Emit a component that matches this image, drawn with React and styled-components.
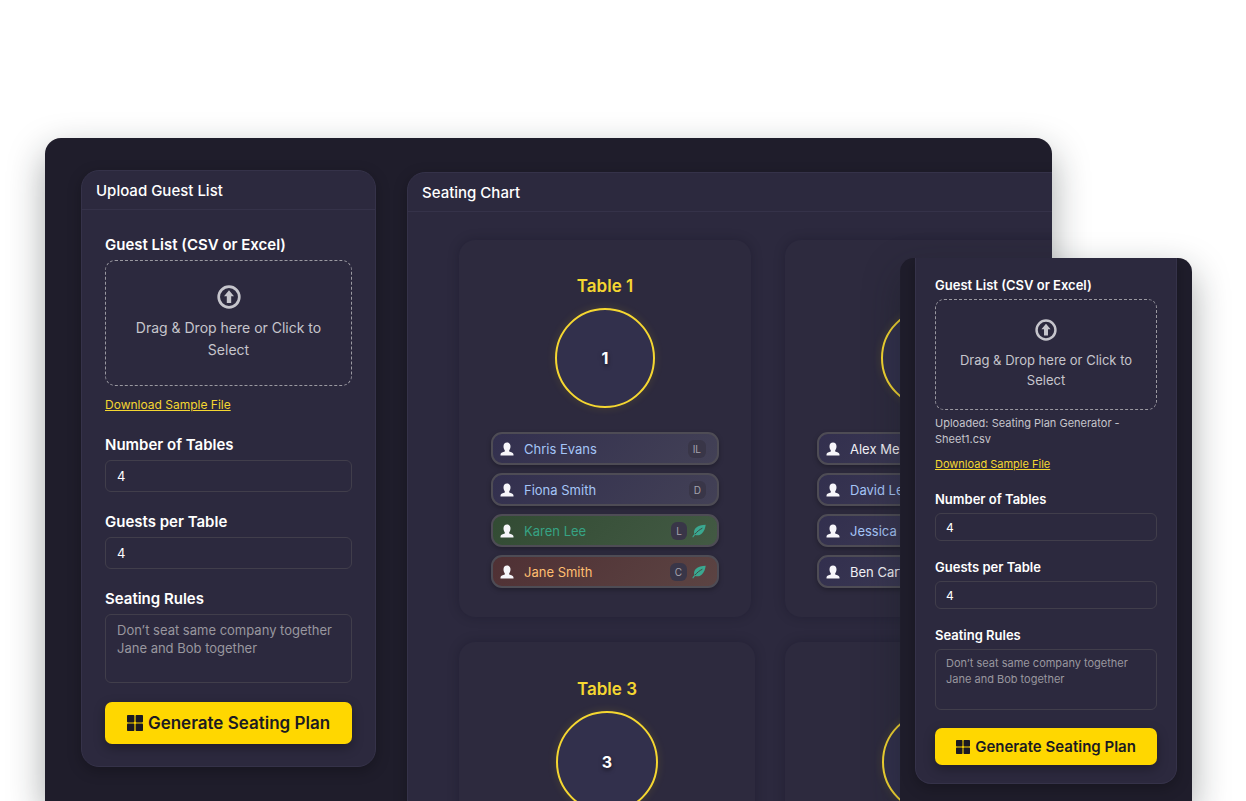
import { useId } from 'react';
import styled, { createGlobalStyle, css, ThemeProvider } from 'styled-components';

const colors = {
  window: '#1f1d2b',
  card: '#2c293e',
  cardBorder: '#353249',
  tableCard: '#2d2a3e',
  fieldBorder: '#413e4b',
  dash: '#9b99a1',
  white: '#ffffff',
  text: '#f4f3f7',
  muted: '#c6c5cc',
  placeholder: '#99979f',
  yellow: '#ffd700',
  gold: '#f5d731',
  ink: '#1b1a22',
};

// sizes for the desktop window and the phone window
const desktop = {
  label: 15,
  labelLine: 22,
  labelGap: 4,
  body: 14,
  bodyLine: 22,
  field: 13,
  area: 13,
  fieldLine: 18,
  fieldHeight: 32,
  fieldPad: 11,
  areaHeight: 69,
  areaPad: 6,
  group: 19,
  link: 12,
  linkLine: 18,
  linkTop: 10,
  linkBottom: 20,
  dropPad: 24,
  dropGap: 8,
  dropIcon: 24,
  radius: 6,
  dropRadius: 10,
  button: 17,
  buttonHeight: 42,
  buttonIcon: 16,
  buttonTop: 0,
  pad: 23,
  cardRadius: 18,
};

const phone = {
  label: 13,
  labelLine: 20,
  labelGap: 4,
  body: 13,
  bodyLine: 20,
  field: 12,
  area: 11,
  fieldLine: 16,
  fieldHeight: 28,
  fieldPad: 10,
  areaHeight: 61,
  areaPad: 5,
  group: 16,
  link: 11,
  linkLine: 16,
  linkTop: 9,
  linkBottom: 17,
  dropPad: 19,
  dropGap: 9,
  dropIcon: 22,
  radius: 6,
  dropRadius: 9,
  button: 15,
  buttonHeight: 37,
  buttonIcon: 14,
  buttonTop: 2,
  pad: 19,
  cardRadius: 16,
};

const GlobalStyle = createGlobalStyle`
  *, *::before, *::after {
    box-sizing: border-box;
  }
  body {
    margin: 0;
    background: ${colors.white};
    color: ${colors.text};
    font-family: Inter, "Liberation Sans", sans-serif;
  }
  input, textarea, button {
    font-family: inherit;
  }
`;

const Page = styled.main`
  position: relative;
  display: flex;
  height: 100vh;
  padding: 138px 194px 0 45px;
  overflow: hidden;
`;
const DesktopWindow = styled.div`
  display: flex;
  align-items: flex-start;
  gap: 31px;
  flex: 1;
  min-width: 0;
  padding: 32px 0 0 36px;
  border-radius: 16px 16px 0 0;
  background: ${colors.window};
  box-shadow: 0 14px 36px rgba(20, 28, 32, 0.38);
  overflow: hidden;
`;
const PhoneWindow = styled.div`
  position: absolute;
  top: 258px;
  right: 54px;
  bottom: 0;
  width: 292px;
  padding: 0 15px;
  border-radius: 14px 14px 0 0;
  background: ${colors.window};
  box-shadow: 0 14px 36px rgba(20, 28, 32, 0.38);
  overflow: hidden;
`;
const Card = styled.section`
  border: 1px solid ${colors.cardBorder};
  border-radius: ${p => p.theme.cardRadius}px;
  background: ${colors.card};
  box-shadow: 0 4px 14px rgba(0, 0, 0, 0.25);
  ${p =>
    p.$cut &&
    css`
      border-top: 0;
      border-top-left-radius: 0;
      border-top-right-radius: 0;
    `};
`;
const UploadCard = styled(Card)`
  width: 295px;
  flex-shrink: 0;
`;
const ChartCard = styled(Card)`
  flex: 0 0 752px;
  margin-top: 2px;
`;
const CardHeader = styled.h2`
  margin: 0;
  padding: 9px 14px 7px;
  border-bottom: 1px solid ${colors.cardBorder};
  color: ${colors.white};
  font-size: 15px;
  font-weight: 500;
  line-height: 22px;
`;
const Form = styled.form`
  display: flex;
  flex-direction: column;
  padding: ${p => (p.$cut ? 17 : 24)}px ${p => p.theme.pad}px
    ${p => p.theme.pad - 1}px;
`;
const Label = styled.label`
  margin-bottom: ${p => p.theme.labelGap}px;
  color: ${colors.white};
  font-size: ${p => p.theme.label}px;
  font-weight: 600;
  line-height: ${p => p.theme.labelLine}px;
`;
const DropZone = styled.button`
  display: flex;
  flex-direction: column;
  align-items: center;
  gap: ${p => p.theme.dropGap}px;
  padding: ${p => p.theme.dropPad}px 20px;
  border: 1px dashed ${colors.dash};
  border-radius: ${p => p.theme.dropRadius}px;
  background: transparent;
  color: ${colors.muted};
  font-size: ${p => p.theme.body}px;
  line-height: ${p => p.theme.bodyLine}px;
  cursor: pointer;
  svg {
    width: ${p => p.theme.dropIcon}px;
    height: ${p => p.theme.dropIcon}px;
  }
`;
const Uploaded = styled.p`
  margin: 5px 0 0;
  color: ${colors.muted};
  font-size: 11px;
  line-height: 16px;
`;
const SampleLink = styled.a`
  align-self: flex-start;
  margin: ${p => p.theme.linkTop}px 0 ${p => p.theme.linkBottom}px;
  color: ${colors.gold};
  font-size: ${p => p.theme.link}px;
  line-height: ${p => p.theme.linkLine}px;
`;
const fieldStyle = css`
  width: 100%;
  margin: 0 0 ${p => p.theme.group}px;
  border: 1px solid ${colors.fieldBorder};
  border-radius: ${p => p.theme.radius}px;
  background: transparent;
  color: ${colors.white};
  line-height: ${p => p.theme.fieldLine}px;
`;
const Input = styled.input`
  ${fieldStyle};
  height: ${p => p.theme.fieldHeight}px;
  padding: 0 ${p => p.theme.fieldPad}px;
  font-size: ${p => p.theme.field}px;
`;
const TextArea = styled.textarea`
  ${fieldStyle};
  display: block;
  height: ${p => p.theme.areaHeight}px;
  padding: ${p => p.theme.areaPad}px ${p => p.theme.fieldPad}px;
  font-size: ${p => p.theme.area}px;
  overflow: hidden;
  resize: none;
  &::placeholder {
    color: ${colors.placeholder};
  }
`;
const GenerateButton = styled.button`
  display: flex;
  align-items: center;
  justify-content: center;
  gap: 5px;
  height: ${p => p.theme.buttonHeight}px;
  margin-top: ${p => p.theme.buttonTop}px;
  padding: 0;
  border: 0;
  border-radius: 7px;
  background: ${colors.yellow};
  box-shadow: 0 4px 12px rgba(0, 0, 0, 0.3);
  color: ${colors.ink};
  font-size: ${p => p.theme.button}px;
  font-weight: 600;
  cursor: pointer;
  svg {
    width: ${p => p.theme.buttonIcon}px;
    height: ${p => p.theme.buttonIcon}px;
  }
`;
const Tables = styled.div`
  display: grid;
  grid-template-columns: repeat(2, 326px);
  row-gap: 25px;
  padding: 28px 51px;
`;
const TableCard = styled.article`
  display: flex;
  flex-direction: column;
  align-items: center;
  width: ${p => (p.$wide ? 296 : 292)}px;
  padding: ${p => (p.$wide ? 33 : 32)}px 32px 29px;
  border-radius: 16px;
  background: ${colors.tableCard};
  box-shadow: 0 0 12px rgba(10, 8, 24, 0.22);
`;
const TableName = styled.h3`
  margin: 0 0 8px;
  color: ${colors.gold};
  font-size: 17px;
  font-weight: 600;
  line-height: 28px;
`;
const Circle = styled.div`
  display: flex;
  align-items: center;
  justify-content: center;
  width: ${p => (p.$wide ? 102 : 100)}px;
  height: ${p => (p.$wide ? 102 : 100)}px;
  margin-bottom: 24px;
  border: 2px solid ${colors.gold};
  border-radius: 50%;
  background: #32304c;
  box-shadow: 0 0 10px rgba(255, 215, 0, 0.13);
  color: ${colors.white};
  font-size: 16px;
  font-weight: 700;
  text-shadow: 0 2px 4px rgba(0, 0, 0, 0.6);
`;
const GuestList = styled.ul`
  display: grid;
  gap: 8px;
  width: 100%;
  margin: 0;
  padding: 0;
  list-style: none;
`;
const tones = {
  plain: { text: '#f1f0f5', from: '#322f4e', to: '#434156' },
  blue: { text: '#a5c5f7', from: '#322f4e', to: '#434156' },
  green: { text: '#36a384', from: '#324b33', to: '#435a44' },
  orange: { text: '#ffbf70', from: '#4f3034', to: '#5c4443' },
};
const Guest = styled.li`
  display: flex;
  align-items: center;
  height: 33px;
  padding: 0 11px 0 7px;
  border: 2px solid #4e4c55;
  border-radius: 11px;
  background: linear-gradient(
      135deg,
      ${p => tones[p.$tone].from},
      ${p => tones[p.$tone].to}
    )
    border-box;
  box-shadow: 0 2px 5px rgba(0, 0, 0, 0.28);
  color: ${p => tones[p.$tone].text};
  font-size: 13px;
  line-height: 20px;
`;
const GuestName = styled.span`
  flex: 1;
  margin-left: 10px;
`;
const Badge = styled.span`
  padding: 0 5px;
  border-radius: 6px;
  background: #393648;
  color: #a6a4ad;
  font-size: 10px;
  line-height: 18px;
`;
const LeafSlot = styled.span`
  display: flex;
  margin-left: 5px;
`;

const UploadIcon = () => (
  <svg viewBox="0 0 24 24" fill="none" aria-hidden="true">
    <circle cx="12" cy="12" r="10.3" stroke="currentColor" strokeWidth="2.7" />
    <path d="M12 5.200 17 11.200H14.200V18H9.800V11.200H7Z" fill="currentColor" />
  </svg>
);
const GridIcon = () => (
  <svg viewBox="0 0 16 16" fill="currentColor" aria-hidden="true">
    <rect width="7.4" height="7.4" rx="0.8" />
    <rect x="8.6" width="7.4" height="7.4" rx="0.8" />
    <rect y="8.6" width="7.4" height="7.4" rx="0.8" />
    <rect x="8.6" y="8.6" width="7.4" height="7.4" rx="0.8" />
  </svg>
);
const PersonIcon = () => (
  <svg width="14" height="14" viewBox="0 0 14 14" fill="#f7f6fa" aria-hidden="true">
    <path d="M7 .6C4.800.6 3.500 2 3.500 4.300c0 1.700.5 3 1.300 3.900v1.300C3 10.100.5 10.600.5 12.600v1h13v-1c0-2-2.500-2.500-4.300-3.100V8.200c.8-.9 1.300-2.200 1.300-3.900C10.500 2 9.200.6 7 .6Z" />
  </svg>
);
const LeafIcon = () => (
  <svg width="14" height="14" viewBox="0 0 14 14" aria-hidden="true">
    <path
      d="M13.700.8C9.900 1.200 6.200 1.500 3.700 3.900 2 5.600 1.700 7.900 2.400 10.100 1.500 11 .8 12 .3 13.100l.8.4c.6-1 1.200-1.800 2-2.500 2.500.7 4.900.3 6.800-1.500C12.400 7.100 13.200 4.200 13.700.8Z"
      fill="#3aa890"
    />
    <path d="M3 10.200C5 7.500 7.400 5.800 10.400 4.200" fill="none" stroke="#3d4a43" strokeWidth="1" />
  </svg>
);

const tables = [
  {
    id: 1,
    guests: [
      { name: 'Chris Evans', tone: 'blue', tag: 'IL' },
      { name: 'Fiona Smith', tone: 'blue', tag: 'D' },
      { name: 'Karen Lee', tone: 'green', tag: 'L', leaf: true },
      { name: 'Jane Smith', tone: 'orange', tag: 'C', leaf: true },
    ],
  },
  {
    id: 2,
    guests: [
      { name: 'Alex Mercer', tone: 'plain' },
      { name: 'David Lee', tone: 'blue' },
      { name: 'Jessica Hall', tone: 'blue' },
      { name: 'Ben Carter', tone: 'plain' },
    ],
  },
  { id: 3, wide: true, guests: [] },
  { id: 4, wide: true, guests: [] },
];

const UploadForm = ({ cut, uploaded }) => {
  const id = useId();
  return (
    <Form $cut={cut} onSubmit={e => e.preventDefault()}>
      <Label htmlFor={`${id}-file`}>Guest List (CSV or Excel)</Label>
      <DropZone type="button" id={`${id}-file`}>
        <UploadIcon />
        <span>Drag &amp; Drop here or Click to Select</span>
      </DropZone>
      {uploaded && <Uploaded>Uploaded: {uploaded}</Uploaded>}
      <SampleLink href="#sample">Download Sample File</SampleLink>
      <Label htmlFor={`${id}-tables`}>Number of Tables</Label>
      <Input id={`${id}-tables`} inputMode="numeric" defaultValue="4" />
      <Label htmlFor={`${id}-guests`}>Guests per Table</Label>
      <Input id={`${id}-guests`} inputMode="numeric" defaultValue="4" />
      <Label htmlFor={`${id}-rules`}>Seating Rules</Label>
      <TextArea
        id={`${id}-rules`}
        placeholder={'Don’t seat same company together\nJane and Bob together'}
      />
      <GenerateButton type="submit">
        <GridIcon />
        Generate Seating Plan
      </GenerateButton>
    </Form>
  );
};

const Table = ({ table }) => (
  <TableCard $wide={table.wide}>
    <TableName>Table {table.id}</TableName>
    <Circle $wide={table.wide}>{table.id}</Circle>
    <GuestList>
      {table.guests.map(guest => (
        <Guest key={guest.name} $tone={guest.tone}>
          <PersonIcon />
          <GuestName>{guest.name}</GuestName>
          {guest.tag && <Badge>{guest.tag}</Badge>}
          {guest.leaf && (
            <LeafSlot>
              <LeafIcon />
            </LeafSlot>
          )}
        </Guest>
      ))}
    </GuestList>
  </TableCard>
);

const App = () => (
  <Page>
    <GlobalStyle />
    <ThemeProvider theme={desktop}>
      <DesktopWindow>
        <UploadCard>
          <CardHeader>Upload Guest List</CardHeader>
          <UploadForm />
        </UploadCard>
        <ChartCard>
          <CardHeader>Seating Chart</CardHeader>
          <Tables>
            {tables.map(table => (
              <Table key={table.id} table={table} />
            ))}
          </Tables>
        </ChartCard>
      </DesktopWindow>
    </ThemeProvider>
    <ThemeProvider theme={phone}>
      <PhoneWindow>
        <Card $cut>
          <UploadForm cut uploaded="Seating Plan Generator - Sheet1.csv" />
        </Card>
      </PhoneWindow>
    </ThemeProvider>
  </Page>
);

export default App;
